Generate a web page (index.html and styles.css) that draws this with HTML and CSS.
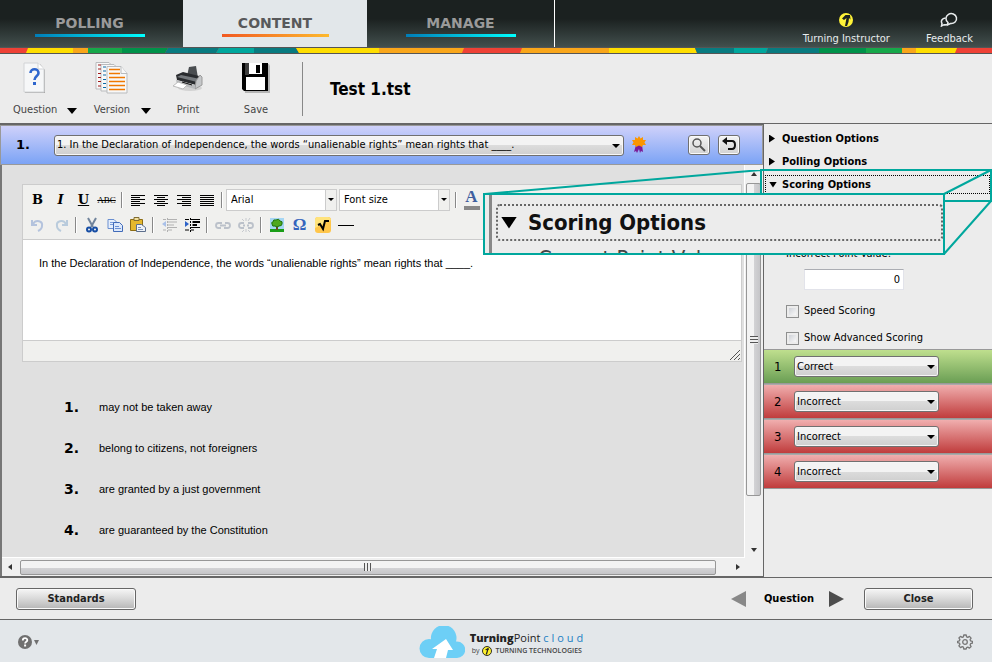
FILE: index.html
```html
<!DOCTYPE html>
<html lang="en">
<head>
<meta charset="utf-8">
<meta name="viewport" content="width=device-width, initial-scale=1">
<title>TurningPoint Cloud - Test 1.tst</title>
<link rel="stylesheet" href="styles.css">
</head>
<body>
<header class="top">
  <nav class="tabs">
    <a class="tab first" href="#polling">POLLING</a>
    <a class="tab active" href="#content">CONTENT</a>
    <a class="tab last" href="#manage">MANAGE</a>
  </nav>
  <div class="account">
    <a class="account-link" href="#user">
      <svg width="14" height="14" viewBox="0 0 14 14"><circle cx="7" cy="7" r="7" fill="#fff338"/><path d="M3 5.500L6.500 2h4.500l.5 4.500-1.500-1.500-.5 4-1.500 4H6l1.500-8L5 7z" fill="#1c2221"/></svg>
      <span>Turning Instructor</span>
    </a>
    <a class="account-link" href="#feedback">
      <svg width="18" height="15" viewBox="0 0 18 15" fill="none" stroke="#e8eced" stroke-width="1.500"><path d="M8 10.500l-.5 2.500 3-1.500a5.300 5 0 1 0-2.500-1z"/><path d="M5.500 6C2 6.500.5 9 2 11.500L1.500 14l2.500-1.300c1.500.4 3 0 4-1"/></svg>
      <span>Feedback</span>
    </a>
  </div>
</header>
<svg class="stripe" viewBox="0 0 992 6" preserveAspectRatio="none" aria-hidden="true">
  <rect width="992" height="6" fill="#ef4136"/>
  <path d="M28 0h46v6H26z" fill="#ffde00"/><path d="M73 0h15v6H73z" fill="#f9a61a"/>
  <path d="M88 0h34v6H88z" fill="#16a84a"/><path d="M122 0h46l-3 6h-43z" fill="#00924a"/>
  <path d="M168 0h51l-3 6h-51z" fill="#087b80"/><path d="M219 0h35v6h-38z" fill="#00a79d"/>
  <path d="M254 0h42l3 6h-45z" fill="#087b80"/><path d="M296 0h83v6h-80z" fill="#ffde00"/>
  <path d="M379 0h85l-2 6h-83z" fill="#f9a61a"/><path d="M522 0h87v6h-89z" fill="#f9a61a"/>
  <path d="M609 0h86l2 6h-88z" fill="#ffde00"/><path d="M695 0h39v6h-37z" fill="#087b80"/>
  <path d="M734 0h34l-2 6h-32z" fill="#00a79d"/><path d="M768 0h51v6h-53z" fill="#087b80"/>
  <path d="M819 0h47v6h-47z" fill="#00924a"/><path d="M866 0h36v6h-36z" fill="#16a84a"/>
  <path d="M902 0h14v6h-14z" fill="#f9a61a"/><path d="M916 0h41l-2 6h-39z" fill="#ffde00"/>
</svg>

<section class="toolbar">
  <div class="tools">
    <div class="tool">
      <button class="face" type="button">
        <svg width="24" height="32" viewBox="0 0 24 32"><path d="M2 2h15l5 6v23H2z" fill="#aaa"/><path d="M1 1h14l6 6v23H1z" fill="#f6f7f8" stroke="#d2d4d6"/><path d="M15 1v6h6" fill="#fff" stroke="#d2d4d6"/><path d="M7.500 11c0-5 8-5 8 0 0 3-4 3-4 7" fill="none" stroke="#2f66cd" stroke-width="2.600"/><path d="M10 20h3v3h-3z" fill="#2f66cd"/></svg>
        <span>Question</span>
      </button>
      <button class="more" type="button" aria-label="Question menu"></button>
    </div>
    <div class="tool">
      <button class="face" type="button">
        <svg width="34" height="32" viewBox="0 0 34 32"><g fill="#f8f8f8" stroke="#b9bbbd"><path d="M1 .5h13l4 4V27H1z"/><path d="M6 2.500h13l4 4V29H6z"/><path d="M12 4.500h14l6 7V31H12z"/><path d="M26 4.500v7h6"/></g><path d="M3 3h3M3 7h3M3 11.500h3M3 15.500h3M3 19.500h3M3 24h3" stroke="#a01818"/><path d="M8 5h3M8 9h3M8 13h3M8 17.500h3M8 21.500h3M8 25.500h3" stroke="#0c6aa8"/><path d="M14 7.500h11M14 11.500h11M14 15.500h16M14 19.500h16M14 23.500h16M14 27.500h16" stroke="#f07800" stroke-width="1.300"/></svg>
        <span>Version</span>
      </button>
      <button class="more" type="button" aria-label="Version menu"></button>
    </div>
    <div class="tool">
      <button class="face" type="button">
        <svg width="32" height="32" viewBox="0 0 32 32"><ellipse cx="18" cy="26" rx="12" ry="3" fill="#d2d2d2"/><path d="M17 5l7-1 2 12-11-2z" fill="#4a4d50"/><path d="M4 13l7-3 16 4 2 4-5 5-19-5z" fill="#292b2e"/><path d="M5 15l20 5 3-3-19-4z" fill="#75797d"/><path d="M24 19l4-6 2 2v8l-7 4z" fill="#c5c7c9" stroke="#999"/><path d="M4 18l19 5v4L5 22z" fill="#b8babc"/><path d="M6 20l9 3-4 4-10-3z" fill="#fff" stroke="#bbb"/><path d="M10 20l10 3" stroke="#111"/></svg>
        <span>Print</span>
      </button>
    </div>
    <div class="tool">
      <button class="face" type="button">
        <svg width="30" height="32" viewBox="0 0 30 32"><path d="M2 2h26l1 2v27H4z" fill="#b5b5b5"/><path d="M1 1h26v28H3l-2-2z" fill="#000"/><path d="M4 1h4v12H4z" fill="#3c3c3c"/><path d="M8 1h13v11H8zM5 15h19v13H5z" fill="#fff"/><path d="M15 3h4v8h-4z" fill="#000"/></svg>
        <span>Save</span>
      </button>
    </div>
  </div>
  <h1 class="title">Test 1.tst</h1>
</section>

<main class="work">
  <section class="editor">
    <div class="question-bar">
      <span class="q-number">1.</span>
      <span class="pick q-pick"><select aria-label="Question"><option>1. In the Declaration of Independence, the words “unalienable rights” mean rights that ____.</option></select></span>
      <svg class="award" width="14" height="18" viewBox="0 0 14 18"><path d="M4 9h6l1 7-2-1-1 2-1-4-2 4-1-2-2 1z" fill="#7a1c98"/><path d="M7 0l1.500 2.500L11 1l0 3 3 0-1.500 2.500L14 9l-3 0-1 2-3-1.500L4 11 3 9 0 9l1.500-2.500L0 4l3 0 0-3 2.500 1.500z" fill="#fa9600"/></svg>
      <button class="mini" type="button" aria-label="Preview"><svg width="16" height="16" viewBox="0 0 16 16" fill="none" stroke="#555"><circle cx="6" cy="6" r="4" stroke-width="1.500"/><path d="M9 9l5 5" stroke-width="2"/></svg></button>
      <button class="mini" type="button" aria-label="Revert"><svg width="16" height="16" viewBox="0 0 16 16"><path d="M6 0L1 4l5 4z" fill="#111"/><path d="M5 4h6q3 0 3 4t-3 4H7" fill="none" stroke="#111" stroke-width="2"/></svg></button>
    </div>
    <div class="viewport">
      <div class="canvas">
        <div class="rich">
          <div class="rich-tools">
            <div class="row">
              <button type="button" class="rt serif-b">B</button>
              <button type="button" class="rt serif-b ital">I</button>
              <button type="button" class="rt serif-b under">U</button>
              <button type="button" class="rt abc">ABC</button>
              <i class="sep"></i>
              <button type="button" class="rt" aria-label="Align left"><svg viewBox="0 0 16 16"><path d="M1 3.500h14M1 5.500h9M1 7.500h14M1 9.500h9M1 11.500h14M1 13.500h9"/></svg></button>
              <button type="button" class="rt" aria-label="Align center"><svg viewBox="0 0 16 16"><path d="M1 3.500h14M4 5.500h8M1 7.500h14M4 9.500h8M1 11.500h14M4 13.500h8"/></svg></button>
              <button type="button" class="rt" aria-label="Align right"><svg viewBox="0 0 16 16"><path d="M1 3.500h14M6 5.500h9M1 7.500h14M6 9.500h9M1 11.500h14M6 13.500h9"/></svg></button>
              <button type="button" class="rt" aria-label="Justify"><svg viewBox="0 0 16 16"><path d="M1 3.500h14M1 5.500h14M1 7.500h14M1 9.500h14M1 11.500h14M1 13.500h14"/></svg></button>
              <i class="sep"></i>
              <span class="combo"><select aria-label="Font family"><option>Arial</option></select></span>
              <span class="combo"><select aria-label="Font size"><option>Font size</option></select></span>
              <i class="sep"></i>
              <button type="button" class="rt color">A</button>
            </div>
            <div class="row">
              <button type="button" class="rt" aria-label="Undo"><svg viewBox="0 0 16 16"><path d="M2 3v5h5M3 7c3-5 10-3 9 2 0 2-2 4-4 5" style="stroke:#b4c3dd;stroke-width:2"/></svg></button>
              <button type="button" class="rt" aria-label="Redo"><svg viewBox="0 0 16 16"><path d="M14 3v5H9M13 7C10 2 3 4 4 9c0 2 2 4 4 5" style="stroke:#b9cbdc;stroke-width:2"/></svg></button>
              <i class="sep"></i>
              <button type="button" class="rt" aria-label="Cut"><svg viewBox="0 0 16 16"><path d="M4 1l5 9M12 1L7 10" style="stroke:#71849c;stroke-width:2"/><circle cx="5" cy="12.500" r="2" style="stroke:#174ea5;stroke-width:2"/><circle cx="11" cy="12.500" r="2" style="stroke:#174ea5;stroke-width:2"/></svg></button>
              <button type="button" class="rt" aria-label="Copy"><svg viewBox="0 0 16 16"><path d="M1 2.500h6l3 3v6H1z" style="fill:#e5eefc;stroke:#6a8fd0"/><path d="M3 5.500h4M3 7.500h4" style="stroke:#7c9edb"/><path d="M6.500 5.500h6l3 3v6h-9z" style="fill:#dce8fb;stroke:#416bb8"/><path d="M8 9.500h4M8 11.500h6" style="stroke:#6b90d4"/></svg></button>
              <button type="button" class="rt" aria-label="Paste"><svg viewBox="0 0 16 16"><path d="M.5 2.500h12v11H.5z" style="fill:#e5b82d;stroke:#8d6d15"/><path d="M4 .5h5v3H4z" style="fill:#f2df9b;stroke:#806c32"/><path d="M6.500 7.500h5l4 3v4h-9z" style="fill:#eef2f8;stroke:#5d6f8c"/><path d="M8 10.500h3M8 12.500h5" style="stroke:#7d93b8"/></svg></button>
              <i class="sep"></i>
              <button type="button" class="rt" aria-label="Outdent"><svg viewBox="0 0 16 16"><path d="M2 2.500h3M7 2.500h9M7 5h9M7 8h6M7 10.500h9M2 13h3M7 13h4" style="stroke:#b2b2b2"/><path d="M6.500 1v14" style="stroke:#b2b2b2;stroke-dasharray:2 1"/><path d="M1 7l4-3v6z" style="fill:#a9c0e8;stroke:none"/></svg></button>
              <button type="button" class="rt" aria-label="Indent"><svg viewBox="0 0 16 16"><path d="M1 2.500h4M7 2.500h9M8 5h8M8 8h5M7 10.500h9M1 13h4M7 13h3"/><path d="M9 5h7M9 8h4" style="stroke-width:2"/><path d="M6.500 1v14" style="stroke-dasharray:2 1"/><path d="M5 7L1 4v6z" style="fill:#2c62c8;stroke:none"/></svg></button>
              <i class="sep"></i>
              <button type="button" class="rt" aria-label="Link"><svg viewBox="0 0 16 16"><path d="M7 6H3.500a2.200 2.200 0 0 0 0 5H6M10 6h2.500a2.200 2.200 0 0 1 0 5H9M5 8.500h6" style="stroke:#bbc1ca;stroke-width:1.800"/></svg></button>
              <button type="button" class="rt" aria-label="Unlink"><svg viewBox="0 0 16 16"><path d="M6 6H3.500a2.200 2.200 0 0 0 0 5H6M10 6h2.500a2.200 2.200 0 0 1 0 5H10M5 8.500h2M9 8.500h2" style="stroke:#bbc1ca;stroke-width:1.800"/><path d="M8 1v3M4 2l2 2M12 1l-2 3M8 12v3M4 15l2-2M12 15l-2-2" style="stroke:#c6c9ce"/></svg></button>
              <i class="sep"></i>
              <button type="button" class="rt" aria-label="Image"><svg viewBox="0 0 16 16"><path d="M1 1h14v14H1z" style="fill:#a6d6f4;stroke:none"/><path d="M1 12h14v3H1z" style="fill:#1b9e18;stroke:none"/><path d="M8 7v6" style="stroke:#6b4a1d;stroke-width:2"/><path d="M3 7q-1-2 1-2 0-3 3-2 3-2 4 1 3 0 2 3 0 2-3 2-2 2-4 0-3 1-3-2z" style="fill:#4fa81e;stroke:#217510"/></svg></button>
              <button type="button" class="rt omega">Ω</button>
              <button type="button" class="rt" aria-label="Equation"><svg viewBox="0 0 16 16"><rect width="16" height="16" rx="3" style="fill:#ffc64a;stroke:none"/><path d="M0 3q0-3 3-3h10q2 0 3 3L0 11z" style="fill:#ffe37c;stroke:none"/><path d="M3 8l2-1 3 5 2-8h4" style="stroke-width:2"/></svg></button>
              <button type="button" class="rt" aria-label="Horizontal line"><svg viewBox="0 0 16 16"><path d="M0 8.500h16"/></svg></button>
            </div>
          </div>
          <textarea class="rich-text" aria-label="Question text" spellcheck="false">In the Declaration of Independence, the words “unalienable rights” mean rights that ____.</textarea>
          <div class="rich-status"><svg width="12" height="12" viewBox="0 0 12 12" stroke="#555"><path d="M1 11L11 1M5 11l6-6M9 11l2-2"/></svg></div>
        </div>
        <ol class="answers">
          <li><b>1.</b><span>may not be taken away</span></li>
          <li><b>2.</b><span>belong to citizens, not foreigners</span></li>
          <li><b>3.</b><span>are granted by a just government</span></li>
          <li><b>4.</b><span>are guaranteed by the Constitution</span></li>
        </ol>
      </div>
      <div class="bar vertical"><i class="arrow up"></i><div class="thumb"><i class="grip"></i></div><i class="arrow down"></i></div>
      <div class="bar horizontal"><i class="arrow left"></i><div class="thumb"><i class="grip"></i></div><i class="arrow right"></i></div>
    </div>
  </section>

  <aside class="options">
    <h2 class="fold"><i class="tri closed"></i>Question Options</h2>
    <h2 class="fold"><i class="tri closed"></i>Polling Options</h2>
    <h2 class="fold focus"><i class="tri"></i>Scoring Options</h2>
    <div class="scoring">
      <label for="incorrect">Incorrect Point Value:</label>
      <input class="points" id="incorrect" type="text" value="0">
      <label class="check"><input type="checkbox">Speed Scoring</label>
      <label class="check"><input type="checkbox">Show Advanced Scoring</label>
    </div>
    <div class="grades">
      <div class="grade good"><label for="g1">1</label><span class="pick"><select id="g1"><option>Correct</option><option>Incorrect</option></select></span></div>
      <div class="grade"><label for="g2">2</label><span class="pick"><select id="g2"><option>Incorrect</option><option>Correct</option></select></span></div>
      <div class="grade"><label for="g3">3</label><span class="pick"><select id="g3"><option>Incorrect</option><option>Correct</option></select></span></div>
      <div class="grade"><label for="g4">4</label><span class="pick"><select id="g4"><option>Incorrect</option><option>Correct</option></select></span></div>
    </div>
    <svg class="rays" width="508" height="88" viewBox="0 0 508 88" fill="none" stroke="#00a79d" stroke-width="2" aria-hidden="true"><path d="M277 1h230v31H277zM1 25L277 1M460 25L507 1M460 85l47-53"/></svg>
    <div class="magnified">
      <div class="mag-head"><i class="tri"></i>Scoring Options</div>
      <div class="mag-next">Correct Point Value:</div>
    </div>
  </aside>
</main>

<section class="actions">
  <button class="push" type="button">Standards</button>
  <div class="pager">
    <button class="step prev" type="button" aria-label="Previous question"></button>
    <span>Question</span>
    <button class="step next" type="button" aria-label="Next question"></button>
  </div>
  <button class="push close" type="button">Close</button>
</section>

<footer class="foot">
  <button class="help" type="button" aria-label="Help"><svg width="22" height="16" viewBox="0 0 22 16"><circle cx="7" cy="8" r="7" fill="#707070"/><path d="M4.800 6.500c0-3.200 4.500-3 4.500-.3 0 1.600-2.200 1.500-2.200 3.300" fill="none" stroke="#fff" stroke-width="1.800"/><path d="M6.100 10.500h2v2h-2z" fill="#fff"/><path d="M16 6h5l-2.500 5z" fill="#707070"/></svg></button>
  <div class="brand">
    <svg width="46" height="32" viewBox="0 0 46 32"><path d="M10 32A9.500 9.500 0 0 1 10 13q1 0 2 .3A12.800 12.800 0 1 1 37 15.500h1a8.200 8.200 0 0 1 0 16.500z" fill="#6dcff6"/><path d="M15 32l3-9h-5l14-10 7 11h-5l-2 8z" fill="#fff"/></svg>
    <div class="brand-text">
      <div class="brand-name"><b>Turning</b>Point <span>cloud</span></div>
      <div class="brand-by">by <svg width="10" height="10" viewBox="0 0 14 14"><circle cx="7" cy="7" r="6.300" fill="#fff22d" stroke="#222" stroke-width="1.300"/><path d="M4 5.500L9 2l1 4-1-1-2 7H5l2-6z" fill="#222"/></svg> <b>TURNING TECHNOLOGIES</b></div>
    </div>
  </div>
  <button class="gear" type="button" aria-label="Settings"><svg width="16" height="16" viewBox="0 0 16 16" fill="none" stroke="#777" stroke-width="1.300" stroke-linejoin="round"><path d="M6.800 1h2.400l.4 1.900 1.200.5 1.700-1 1.600 1.700-1 1.600.5 1.200 1.800.4v1.900l-1.800.5-.5 1.200 1 1.600-1.600 1.600-1.700-1-1.200.5L9.200 15H6.800l-.4-1.900-1.200-.5-1.700 1-1.600-1.700 1-1.600-.5-1.200-1.800-.4V7.300l1.800-.5.5-1.200-1-1.600 1.600-1.600 1.700 1 1.200-.5z"/><circle cx="8" cy="8" r="2.300"/></svg></button>
</footer>
</body>
</html>
```
FILE: styles.css
```css
* { box-sizing: border-box; }
body {
  margin: 0;
  min-height: 100vh;
  display: flex;
  flex-direction: column;
  background: #ececec;
  color: #000;
  font: 11px/14px "DejaVu Sans Condensed", Tahoma, "DejaVu Sans", sans-serif;
}
button, select, input, textarea { font: inherit; color: inherit; margin: 0; }
button { border: 0; padding: 0; background: none; }
a { color: inherit; text-decoration: none; }
h1, h2, ol { margin: 0; padding: 0; list-style: none; }
svg { display: block; flex: none; }

.top {
  display: flex;
  justify-content: space-between;
  height: 47px;
  background: linear-gradient(#1b2120 0 40%, #424f4d);
}
.tabs { display: flex; border-right: 1px solid #fff; }
.tab {
  display: flex;
  flex-direction: column;
  align-items: center;
  width: 184px;
  padding-top: 14px;
  color: #9a9a9a;
  font: bold 14px/18px "DejaVu Sans", sans-serif;
}
.tab.first { width: 183px; padding-right: 4px; }
.tab.last { width: 187px; }
.tab::after {
  content: "";
  width: 110px;
  height: 3px;
  margin-top: 2px;
  background: linear-gradient(90deg, #007db8, #0ff);
}
.tab.active { background: #e2e7ea; color: #58595b; }
.tab.active::after { width: 107px; background: linear-gradient(90deg, #f15a22, #fdb92e); }
.account { display: flex; gap: 36px; padding-right: 19px; color: #e8eced; }
.account-link { display: flex; flex-direction: column; align-items: center; justify-content: flex-end; gap: 5px; padding-bottom: 1px; }
.stripe { width: 100%; height: 7px; border: solid #555; border-width: 1px 0; }

.toolbar { display: flex; height: 69px; align-items: center; }
.tools {
  display: grid;
  grid-template-columns: 80px 76px 68px 65px;
  padding-left: 13px;
  height: 54px;
  border-right: 1px solid #888;
  color: #444;
}
.tool { display: flex; align-items: flex-end; gap: 10px; padding-bottom: 1px; }
.face { display: flex; flex-direction: column; align-items: center; gap: 9px; min-width: 38px; }
.more { border: solid transparent; border-width: 6px 5px 0; border-top-color: #000; margin-bottom: 3px; }
.title { padding-left: 27px; font-size: 17px; line-height: 20px; }

.work { display: flex; flex: 1; border-bottom: 1px solid #666; }
.editor {
  flex: 1;
  min-width: 0;
  display: flex;
  flex-direction: column;
  border: solid #666;
  border-width: 2px 1px 1px 0;
}
.question-bar {
  display: flex;
  align-items: center;
  height: 40px;
  padding: 0 22px 0 15px;
  border: 1px solid #999;
  background: linear-gradient(#cfd1fa, #7ba3f5);
}
.q-number { width: 38px; font: bold 13px/16px "DejaVu Sans", sans-serif; }
.pick { position: relative; display: flex; }
.pick select {
  appearance: none;
  width: 100%;
  height: 21px;
  padding: 0 20px 0 2px;
  border: 1px solid #707070;
  border-radius: 3px;
  background: linear-gradient(#f3f3f3 0 50%, #dcdcdc 50%, #cfcfcf);
  box-shadow: inset 0 0 0 1px #f6f6f6;
}
.pick::after, .combo::after {
  content: "";
  position: absolute;
  right: 4px;
  top: 9px;
  border: solid transparent;
  border-width: 4px 4px 0;
  border-top-color: #000;
  pointer-events: none;
}
.q-pick { flex: 1; min-width: 0; }
.award { margin: 0 42px 0 8px; }
.mini {
  width: 22px;
  height: 20px;
  display: grid;
  place-items: center;
  border: 1px solid #707070;
  border-radius: 3px;
  background: linear-gradient(#f4f4f4, #d2d2d2);
  box-shadow: inset 0 0 0 1px #fafafa;
}
.mini + .mini { margin-left: 8px; }

.viewport {
  flex: 1;
  display: grid;
  grid-template: 1fr 18px / 1fr 18px;
  border-left: 2px solid #777;
  background: #f0f0f0;
}
.canvas { padding: 19px 2px 0 20px; background: #e0e0e0; border: solid #fff; border-width: 0 1px 1px 0; }
.rich { border: 1px solid #ccc; background: #f0f0ee; }
.rich-tools { padding: 2px 3px; border-bottom: 1px solid #ccc; }
.row { display: flex; align-items: center; height: 25px; }
.rt { width: 23px; height: 22px; display: grid; place-items: center; }
.rt svg { width: 16px; height: 16px; fill: none; stroke: #000; }
.serif-b { font: bold 13px/18px "DejaVu Serif", serif; }
.ital { font-style: italic; }
.under { text-decoration: underline; }
.abc { font: 9px/12px "Liberation Serif", serif; text-decoration: line-through; }
.color { font: bold 17px/16px "Liberation Serif", serif; color: #3f5f9f; }
.color::after { content: ""; width: 16px; height: 4px; background: #888; }
.omega { font: bold 17px/18px "Liberation Serif", serif; color: #3564bd; }
.sep { width: 2px; height: 16px; margin: 0 3px; background: #fff; border-left: 1px solid #888; }
.combo { position: relative; display: flex; width: 111px; margin-right: 2px; }
.combo select { appearance: none; width: 100%; height: 22px; padding: 0 4px; border: 1px solid #ccc; background: #fff; }
.combo::before { content: ""; position: absolute; right: 1px; top: 1px; width: 10px; height: 20px; background: #f0f0ee; border-left: 1px solid #ccc; pointer-events: none; }
.combo::after { right: 3px; border-width: 3px 3px 0; }
.rich-text {
  display: block;
  width: 100%;
  height: 100px;
  padding: 16px;
  border: 0;
  resize: none;
  background: #fff;
  font: 11px/14px "Liberation Sans", Arial, sans-serif;
}
.rich-status { height: 21px; border-top: 1px solid #ccc; display: flex; justify-content: flex-end; align-items: flex-end; }
.answers { display: grid; gap: 25px; padding: 37px 42px 0; }
.answers li { display: flex; align-items: center; height: 16px; font: 11px/16px "Liberation Sans", Arial, sans-serif; }
.answers b { width: 35px; font: bold 14px/16px "DejaVu Sans", sans-serif; }

.bar { display: flex; }
.vertical { flex-direction: column; align-items: center; padding: 7px 2px 6px 1px; }
.horizontal { align-items: center; padding: 1px 5px 1px 6px; }
.thumb { display: grid; place-items: center; border: 1px solid #979797; border-radius: 2px; }
.vertical .thumb { flex: 0 1 313px; width: 15px; margin: 7px 0 auto; background: linear-gradient(90deg, #f3f3f3 50%, #d4d4d6 50%, #c5c5c8); }
.horizontal .thumb { flex: 1; height: 15px; margin: 0 20px 0 8px; background: linear-gradient(#f3f3f3 50%, #d4d4d6 50%, #c5c5c8); }
.grip { width: 8px; height: 8px; }
.vertical .grip { background: repeating-linear-gradient(#555 0 1px, #eee 1px 3px); }
.horizontal .grip { background: repeating-linear-gradient(90deg, #555 0 1px, #eee 1px 3px); }
.arrow { width: 0; height: 0; border: 3px solid transparent; }
.up { border-top: 0; border-bottom: 4px solid #333; }
.down { border-bottom: 0; border-top: 4px solid #333; }
.left { border-left: 0; border-right: 4px solid #333; }
.right { border-right: 0; border-left: 4px solid #333; }

.options { position: relative; width: 228px; border-top: 1px solid #666; padding-top: 5px; }
.fold { display: flex; align-items: center; gap: 5px; height: 19px; margin: 0 2px 4px 1px; padding-left: 3px; font-size: 11px; line-height: 16px; border: 1px solid transparent; }
.fold.focus { border: 1px dotted #000; }
.tri { width: 8px; height: 6px; background: #000; clip-path: polygon(0 0, 100% 0, 50% 100%); }
.tri.closed { width: 6px; height: 8px; clip-path: polygon(0 0, 100% 50%, 0 100%); margin-right: 2px; }
.scoring { display: flex; flex-direction: column; align-items: flex-start; padding: 49px 22px 3px; }
.points { width: 100px; height: 21px; margin: 8px 0 13px 18px; padding: 0 3px; text-align: right; border: 1px solid #e2e3ea; border-top-color: #abadb3; background: #fff; }
.check { display: flex; align-items: center; gap: 5px; height: 16px; margin-bottom: 11px; }
.check:last-child { margin-bottom: 0; }
.check input { appearance: none; width: 13px; height: 13px; border: 1px solid #8e8f8f; background: linear-gradient(135deg, #cfd2d8, #f8f8f8) content-box #f4f4f4; padding: 2px; }
.grade { display: flex; align-items: center; height: 35px; padding-left: 10px; border: solid #999; border-width: 1px 0; background: linear-gradient(#f0aeae, #c03c3c); }
.grade + .grade { border-top-color: #aaa; }
.grade.good { background: linear-gradient(#bfdf8e, #6a9e54); }
.grade label { width: 20px; font-size: 13px; }
.grade .pick { width: 145px; }
.rays { position: absolute; right: 0; top: 45px; pointer-events: none; }
.magnified {
  position: absolute;
  right: 47px;
  top: 69px;
  width: 462px;
  height: 62px;
  padding: 9px 0 0 4px;
  overflow: hidden;
  border: 2px solid #00a79d;
  background: #ececec;
}
.magnified::before { content: ""; position: absolute; inset: 0 auto 0 4px; width: 3px; background: #888; }
.mag-head { display: flex; align-items: center; gap: 11px; height: 37px; margin-left: 7px; padding-left: 3px; border: 2px dotted #666; border-radius: 4px; color: #111; font-size: 22px; font-weight: bold; }
.mag-head .tri { width: 16px; height: 12px; }
.mag-next { padding: 6px 0 0 49px; font-size: 22px; line-height: 24px; color: #444; white-space: nowrap; }

.actions { display: flex; align-items: center; height: 42px; padding: 0 19px 0 16px; border-bottom: 1px solid #666; font-weight: bold; }
.push { width: 120px; height: 22px; border: 1px solid #666; border-radius: 3px; background: linear-gradient(#f6f6f6, #d8d8d8 50%, #b6b6b6); box-shadow: inset 0 0 0 1px #fafafa; color: #222; }
.push.close { width: 109px; }
.pager { display: flex; align-items: center; gap: 15px; margin: 0 20px 0 auto; }
.step { border: solid transparent; border-width: 8px 0; }
.prev { border-right: 15px solid #888; margin-right: 3px; }
.next { border-left: 15px solid #4d4d4d; }

.foot { display: flex; align-items: center; justify-content: space-between; height: 42px; padding: 2px 19px 0 18px; background: #e3e7ea; }
.brand { display: flex; gap: 5px; padding-left: 8px; }
.brand-text { padding-top: 4px; color: #222; white-space: nowrap; }
.brand-name { font: 11px/16px "Open Sans", sans-serif; }
.brand-name b { font-weight: 800; }
.brand-name span { color: #1c7fc4; letter-spacing: 3px; }
.brand-by { display: flex; align-items: center; gap: 3px; padding-left: 2px; font: 7px/10px "Open Sans", sans-serif; color: #444; }
.brand-by b { font-weight: 600; }
```
